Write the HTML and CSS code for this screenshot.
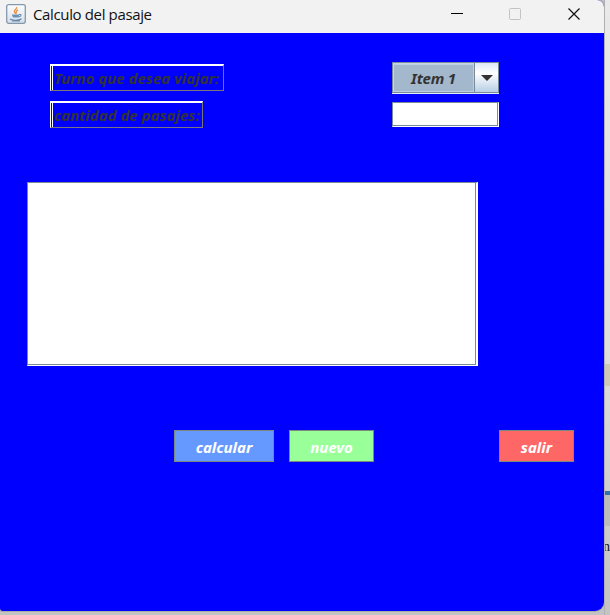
FILE: index.html
```html
<!DOCTYPE html>
<html lang="es">
<head>
<meta charset="utf-8">
<title>Calculo del pasaje</title>
<link rel="stylesheet" href="styles.css">
</head>
<body>
<div class="desktop">
  <main class="window">
    <header class="titlebar">
      <svg class="java" width="20" height="20" viewBox="0 0 20 20">
        <defs><linearGradient id="tile" x2="0" y2="1"><stop stop-color="#fdfdfd"/><stop offset="1" stop-color="#d5dfe8"/></linearGradient></defs>
        <rect x=".7" y=".7" width="18.6" height="18.6" rx="2" fill="url(#tile)" stroke="#8499ad" stroke-width="1.3"/>
        <path d="M10.5 3.2c1.2 2-3.4 2.8-2 4.9.4.7 1.2 1 1 1.8M12 5.8c-3 1.4-1.4 2.2-1.8 3.7" fill="none" stroke="#ee8b35" stroke-width="1.3"/>
        <path d="M5.8 10.4h7.5l-.7 3.2H7z" fill="#6b91b5"/>
        <path d="M13 10.5c2.7-.5 2.7 1.8-.2 2.4M4 15c2 1.7 9 1.7 11.5-.3M6 17h8" fill="none" stroke="#6488aa" stroke-width="1.1"/>
      </svg>
      <h1 class="title">Calculo del pasaje</h1>
      <svg class="controls" width="130" height="14" viewBox="0 0 130 14">
        <path d="M0 6.5h12" stroke="#000"/>
        <rect x="58.5" y="1.5" width="11" height="11" rx="1" fill="none" stroke="#c3c3c3"/>
        <path d="M117.5 1.5l11 11M128.5 1.5l-11 11" stroke="#111" stroke-width="1.2"/>
      </svg>
    </header>
    <form class="content">
      <div class="row row-shift">
        <label class="etched shift"><span>Turno que desea viajar:</span></label>
        <div class="combo">
          <span class="combo-value"><span>Item 1</span></span>
          <span class="combo-arrow"><svg width="12" height="6" viewBox="0 0 12 6"><path d="M0 0h12L6 6z" fill="#333"/></svg></span>
        </div>
      </div>
      <div class="row row-count">
        <label class="etched count"><span>cantidad de pasajes:</span></label>
        <div class="field"></div>
      </div>
      <div class="area"></div>
      <div class="actions">
        <button type="button" class="btn calc">calcular</button>
        <button type="button" class="btn new">nuevo</button>
        <button type="button" class="btn exit">salir</button>
      </div>
    </form>
  </main>
  <aside class="behind">
    <div class="strip tan"></div>
    <div class="strip line"></div>
    <div class="strip dark"></div>
    <div class="letter">n</div>
  </aside>
</div>
</body>
</html>
```
FILE: styles.css
```css
* { box-sizing: border-box; }
body { margin: 0; width: 610px; height: 615px; overflow: hidden; background: #c3c3c3; }
.desktop { display: flex; height: 615px; }
.window {
  width: 604px; height: 611px; flex: none; background: #00f; overflow: hidden;
  border-radius: 0 7px 9px 3px; box-shadow: 0 0 0 1px #aaa;
}
.titlebar { display: flex; height: 33px; background: #f2f2f2; padding-left: 6px; }
.java { margin-top: 4px; }
.title { margin: 0 0 0 7px; width: 418px; font: 400 15px/29px "Open Sans", sans-serif; letter-spacing: -.36px; color: #111; white-space: nowrap; }
.controls { margin-top: 7px; flex: none; }
.content { margin: 0; padding-top: 29px; font: italic 700 15px/20px "Noto Sans", "Open Sans", sans-serif; }
.row { display: flex; justify-content: space-between; width: 449px; margin-left: 50px; }
.row-shift { height: 32px; }
.row-count { height: 27px; margin-top: 7px; }
.etched {
  height: 27px; padding-left: 2px; border: solid; border-width: 2px 1px 1px;
  border-color: #fff #77777c #77777c #fff; color: #333; white-space: nowrap; display: flex;
}
.etched span { border-left: 1px solid #fff; margin-left: -1px; padding: 3px 0 0 1px; line-height: 19px; }
.shift { width: 174px; margin-top: 2px; }
.count { width: 153px; }
.combo { display: flex; width: 107px; height: 32px; background: #e3eefa; padding-bottom: 1px; }
.combo-value {
  width: 82px; border: 1px solid #7a8a99; border-right: 0; background: #a3b8cc;
  box-shadow: inset 1px 1px #c8d6e4, inset 0 2px #b8cfe5, inset -1px -1px #b8cfe5;
  text-align: center; line-height: 30px; color: #333; letter-spacing: -.2px;
}
.combo-arrow {
  width: 25px; border: 1px solid #7a8a99; display: flex; align-items: center; justify-content: center;
  background: linear-gradient(#dce8f4, #fff 35%, #b8cfe5);
}
.field { width: 107px; height: 25px; margin-top: 1px; background: #fff; border: 1px solid #7a8a99; border-right-color: #fff; border-bottom-color: #fff; box-shadow: inset -1px -1px #7a8a99; }
.area { width: 451px; height: 184px; margin: 54px 0 0 27px; background: #fff; border: 1px solid #7a8a99; border-right: 2px solid #fff; border-bottom: 1px solid #fff; box-shadow: inset -1px -1px #7a8a99; }
.actions { display: flex; margin: 64px 0 0 174px; }
.btn { height: 32px; padding: 2px 0 0; border: 1px solid #7a8a80; color: #fff; font: inherit; }
.calc { width: 100px; background: #69f; }
.new { width: 85px; margin-left: 15px; background: #9f9; }
.exit { width: 75px; margin-left: 125px; background: #f66; }
.behind { width: 6px; height: 615px; padding-top: 364px; background: linear-gradient(#e9e9e9, #dedede 350px, #c3c3c3); overflow: hidden; border-left: 1px solid #b0b0b0; }
.strip.tan { height: 22px; background: #cecab5; }
.strip.line { height: 4px; margin-top: 105px; background: #3273aa; }
.strip.dark { height: 31px; background: #bcbcbc; }
.letter { margin: 14px 0 0 -2px; font: 14px/14px "Liberation Serif", serif; color: #111; }
```
